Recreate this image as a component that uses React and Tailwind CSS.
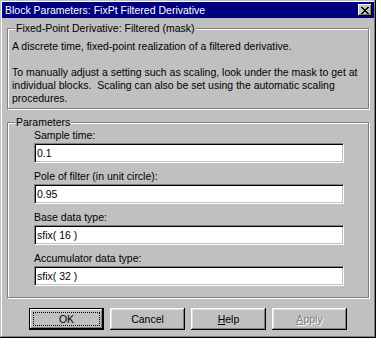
import React from 'react';

const font = "font-['Liberation_Sans',Arial,sans-serif] text-[10.5px] leading-[13px]";

function CloseGlyph() {
    // 8x7 pixel X, as on the classic caption button
    const rows = ['11000011', '01100110', '00111100', '00011000', '00111100', '01100110', '11000011'];
    return (
        <svg width="8" height="7" viewBox="0 0 8 7" shapeRendering="crispEdges">
            {rows.map((r, y) =>
                r.split('').map((c, x) => (c === '1' ? <rect key={`${x}-${y}`} x={x} y={y} width="1" height="1" fill="#000" /> : null))
            )}
        </svg>
    );
}

function GroupBox({ legend, className, children }) {
    return (
        <div className={`relative mx-[5px] border border-[#808080] shadow-[inset_1px_1px_0_#fff,1px_1px_0_#fff] ${className}`}>
            <span className="absolute left-[7px] top-[-7px] bg-[#c0c0c0] px-[1px] whitespace-nowrap">{legend}</span>
            {children}
        </div>
    );
}

function Field({ label, value }) {
    return (
        <div className="flex flex-col">
            <div className="h-[13px] whitespace-nowrap">{label}</div>
            <div className="mt-[1px] flex h-[20px] w-[310px] items-center border border-t-[#808080] border-l-[#808080] border-b-white border-r-white bg-white pl-[2px] shadow-[inset_1px_1px_0_#000,inset_-1px_-1px_0_#c0c0c0]">
                {value}
            </div>
        </div>
    );
}

function Button({ children, isDefault, disabled }) {
    if (isDefault) {
        return (
            <div className="flex h-[22px] w-[75px] border border-black p-[3px] shadow-[inset_-1px_-1px_0_#000,inset_1px_1px_0_#fff,inset_-2px_-2px_0_#808080]">
                <div className="flex flex-1 items-center justify-center border border-dotted border-black">{children}</div>
            </div>
        );
    }
    return (
        <div
            className={`flex h-[22px] w-[75px] items-center justify-center shadow-[inset_-1px_-1px_0_#000,inset_1px_1px_0_#fff,inset_-2px_-2px_0_#808080,inset_2px_2px_0_#dfdfdf] ${
                disabled ? 'text-[#808080] [text-shadow:1px_1px_0_#fff]' : ''
            }`}
        >
            {children}
        </div>
    );
}

export default function App() {
    return (
        <div className={`min-h-screen bg-white text-black ${font}`}>
            <div className="flex h-[338px] w-[376px] flex-col bg-[#c0c0c0] p-[2px] shadow-[inset_-1px_-1px_0_#000,inset_1px_1px_0_#c0c0c0,inset_-2px_-2px_0_#808080,inset_2px_2px_0_#fff]">
                {/* Caption */}
                <div className="flex h-[16px] items-center justify-between bg-[#000080] pl-[3px] pr-[2px] text-white">
                    <span className="whitespace-nowrap">Block Parameters: FixPt Filtered Derivative</span>
                    <div className="flex h-[12px] w-[14px] items-center justify-center bg-[#c0c0c0] shadow-[inset_-1px_-1px_0_#000,inset_1px_1px_0_#fff,inset_-2px_-2px_0_#808080]">
                        <CloseGlyph />
                    </div>
                </div>

                <GroupBox legend="Fixed-Point Derivative: Filtered (mask)" className="mt-[10px] pl-[4px] pt-[11px] pb-[3px]">
                    <div className="whitespace-pre">
                        <div>A discrete time, fixed-point realization of a filtered derivative.</div>
                        <div>{' '}</div>
                        <div>To manually adjust a setting such as scaling, look under the mask to get at</div>
                        <div>individual blocks.  Scaling can also be set using the automatic scaling</div>
                        <div>procedures.</div>
                    </div>
                </GroupBox>

                <GroupBox legend="Parameters" className="mt-[13px] flex flex-col gap-[7px] pl-[26px] pt-[6px] pb-[11px]">
                    <Field label="Sample time:" value="0.1" />
                    <Field label="Pole of filter (in unit circle):" value="0.95" />
                    <Field label="Base data type:" value="sfix( 16 )" />
                    <Field label="Accumulator data type:" value="sfix( 32 )" />
                </GroupBox>

                <div className="mt-[10px] ml-[27px] flex gap-[6px]">
                    <Button isDefault>OK</Button>
                    <Button>Cancel</Button>
                    <Button>
                        <span><span className="underline">H</span>elp</span>
                    </Button>
                    <Button disabled>
                        <span><span className="underline">A</span>pply</span>
                    </Button>
                </div>
            </div>
        </div>
    );
}
